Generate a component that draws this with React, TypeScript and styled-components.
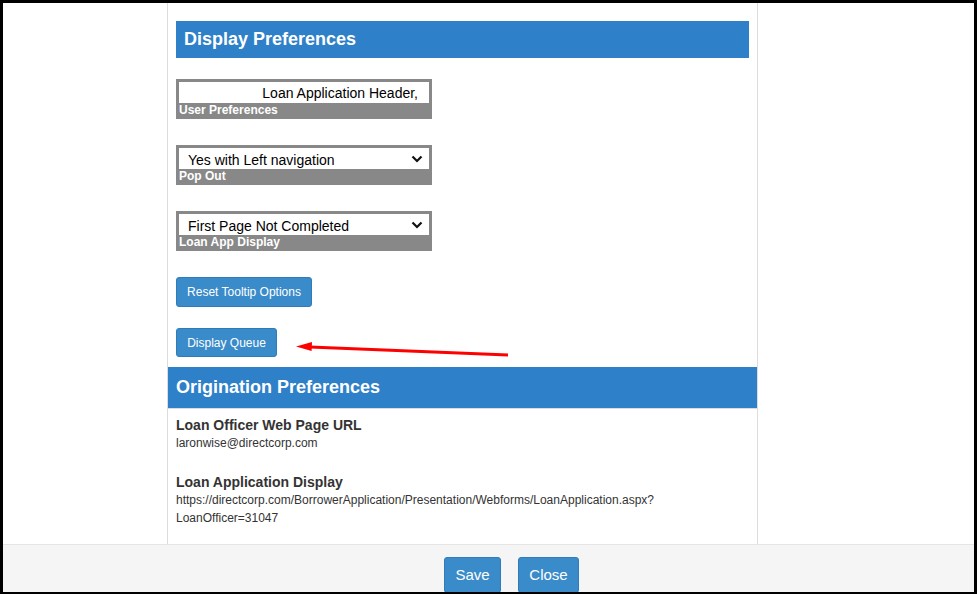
import React from 'react';
import styled, {createGlobalStyle} from 'styled-components';

const GlobalStyle = createGlobalStyle`
	html, body {
		margin: 0;
		padding: 0;
		background: #ffffff;
	}
	body {
		font-family: "Liberation Sans", Arial, sans-serif;
	}
`;

const Frame = styled.div`
	box-sizing: border-box;
	width: 977px;
	height: 594px;
	border: 3px solid #000;
	border-bottom-width: 2px;
	display: flex;
	flex-direction: column;
	overflow: hidden;
	background: #fff;
`;

const Main = styled.div`
	flex: 1;
	display: flex;
	min-height: 0;
	padding-left: 164px;
`;

const Panel = styled.div`
	position: relative;
	box-sizing: border-box;
	width: 591px;
	border-left: 1px solid #dcdcdc;
	border-right: 1px solid #dcdcdc;
	display: flex;
	flex-direction: column;
`;

const DisplaySection = styled.div`
	padding: 18px 8px 0;
	display: flex;
	flex-direction: column;
	align-items: flex-start;
`;

const SectionHeader = styled.div<{$full?: boolean}>`
	box-sizing: border-box;
	align-self: stretch;
	background: #2e81c8;
	color: #fff;
	font-weight: 700;
	font-size: 18px;
	display: flex;
	align-items: center;
	height: ${p => (p.$full ? '42px' : '37px')};
	padding-left: 8px;
	border-bottom: ${p => (p.$full ? '1px solid #dcdcdc' : 'none')};
`;

const FieldBox = styled.div<{$top: number}>`
	box-sizing: border-box;
	width: 256px;
	height: 40px;
	background: #888888;
	padding: 3px 3px 0;
	margin-top: ${p => p.$top}px;
	display: flex;
	flex-direction: column;
`;

const TextInput = styled.input`
	box-sizing: border-box;
	width: 250px;
	height: 21px;
	border: none;
	outline: none;
	margin: 0;
	padding: 1px 11px 0 4px;
	background: #fff;
	color: #000;
	text-align: right;
	font-family: "Liberation Sans", Arial, sans-serif;
	font-size: 14px;
`;

const SelectWrap = styled.div`
	position: relative;
	width: 250px;
	height: 21px;
`;

const Select = styled.select`
	box-sizing: border-box;
	appearance: none;
	-webkit-appearance: none;
	width: 250px;
	height: 21px;
	border: none;
	outline: none;
	margin: 0;
	padding: 3px 24px 0 9px;
	background: #fff;
	color: #000;
	font-family: "Liberation Sans", Arial, sans-serif;
	font-size: 14px;
	line-height: 18px;
`;

const Chevron = styled.svg`
	position: absolute;
	right: 6px;
	top: 7px;
	pointer-events: none;
`;

const FieldLabel = styled.div`
	color: #fff;
	font-weight: 700;
	font-size: 12px;
	line-height: 15px;
	padding-left: 0;
`;

const Button = styled.button<{$top?: number}>`
	box-sizing: border-box;
	margin-top: ${p => p.$top ?? 0}px;
	background: #3a8bca;
	border: 1px solid #2f7cb9;
	border-radius: 3px;
	color: #fff;
	font-family: "Liberation Sans", Arial, sans-serif;
	font-size: 12px;
	padding: 0 10px;
	cursor: pointer;
`;

const Arrow = styled.svg`
	position: absolute;
	left: 128px;
	top: 334px;
	pointer-events: none;
`;

const Origination = styled.div`
	margin-top: 10px;
	display: flex;
	flex-direction: column;
`;

const InfoList = styled.div`
	padding: 7px 8px 0;
	color: #333;
`;

const InfoItem = styled.div<{$top?: number}>`
	margin-top: ${p => p.$top ?? 0}px;
`;

const InfoTitle = styled.div`
	font-weight: 700;
	font-size: 14px;
	line-height: 18px;
`;

const InfoValue = styled.div`
	font-size: 12px;
	line-height: 18px;
`;

const Footer = styled.div`
	box-sizing: border-box;
	height: 48px;
	flex-shrink: 0;
	background: #f5f5f5;
	border-top: 1px solid #e5e5e5;
	display: flex;
	align-items: flex-start;
	gap: 17px;
	padding: 12px 0 0 441px;
	overflow: hidden;
`;

const FooterButton = styled(Button)<{$w: number}>`
	flex-shrink: 0;
	width: ${p => p.$w}px;
	height: 36px;
	font-size: 15px;
	padding: 0 0 2px;
`;

const ChevronIcon = () => (
	<Chevron width="12" height="8" viewBox="0 0 12 8">
		<path d="M1.5 1.5 L6 6 L10.5 1.5" fill="none" stroke="#111" strokeWidth="2.2" />
	</Chevron>
);

const SelectField = ({value, label, top}: {value: string; label: string; top: number}) => (
	<FieldBox $top={top}>
		<SelectWrap>
			<Select defaultValue={value}>
				<option>{value}</option>
			</Select>
			<ChevronIcon />
		</SelectWrap>
		<FieldLabel>{label}</FieldLabel>
	</FieldBox>
);

export default function App() {
	return (
		<>
			<GlobalStyle />
			<Frame>
				<Main>
					<Panel>
						<DisplaySection>
							<SectionHeader>Display Preferences</SectionHeader>
							<FieldBox $top={21}>
								<TextInput readOnly value="Loan Application Header," />
								<FieldLabel>User Preferences</FieldLabel>
							</FieldBox>
							<SelectField value="Yes with Left navigation" label="Pop Out" top={26} />
							<SelectField value="First Page Not Completed" label="Loan App Display" top={26} />
							<Button $top={26} style={{height: 30, width: 136}}>
								Reset Tooltip Options
							</Button>
							<Button $top={21} style={{height: 29, width: 101}}>
								Display Queue
							</Button>
						</DisplaySection>
						<Origination>
							<SectionHeader $full>Origination Preferences</SectionHeader>
							<InfoList>
								<InfoItem>
									<InfoTitle>Loan Officer Web Page URL</InfoTitle>
									<InfoValue>laronwise@directcorp.com</InfoValue>
								</InfoItem>
								<InfoItem $top={21}>
									<InfoTitle>Loan Application Display</InfoTitle>
									<InfoValue>
										https://directcorp.com/BorrowerApplication/Presentation/Webforms/LoanApplication.aspx?
									</InfoValue>
									<InfoValue>LoanOfficer=31047</InfoValue>
								</InfoItem>
							</InfoList>
						</Origination>
						<Arrow width="220" height="24" viewBox="0 0 220 24">
							<line x1="14" y1="10" x2="212" y2="18" stroke="#ff0000" strokeWidth="3" />
							<polygon points="0,9.5 16,5 15.6,14" fill="#ff0000" />
						</Arrow>
					</Panel>
				</Main>
				<Footer>
					<FooterButton $w={57}>Save</FooterButton>
					<FooterButton $w={61}>Close</FooterButton>
				</Footer>
			</Frame>
		</>
	);
}
